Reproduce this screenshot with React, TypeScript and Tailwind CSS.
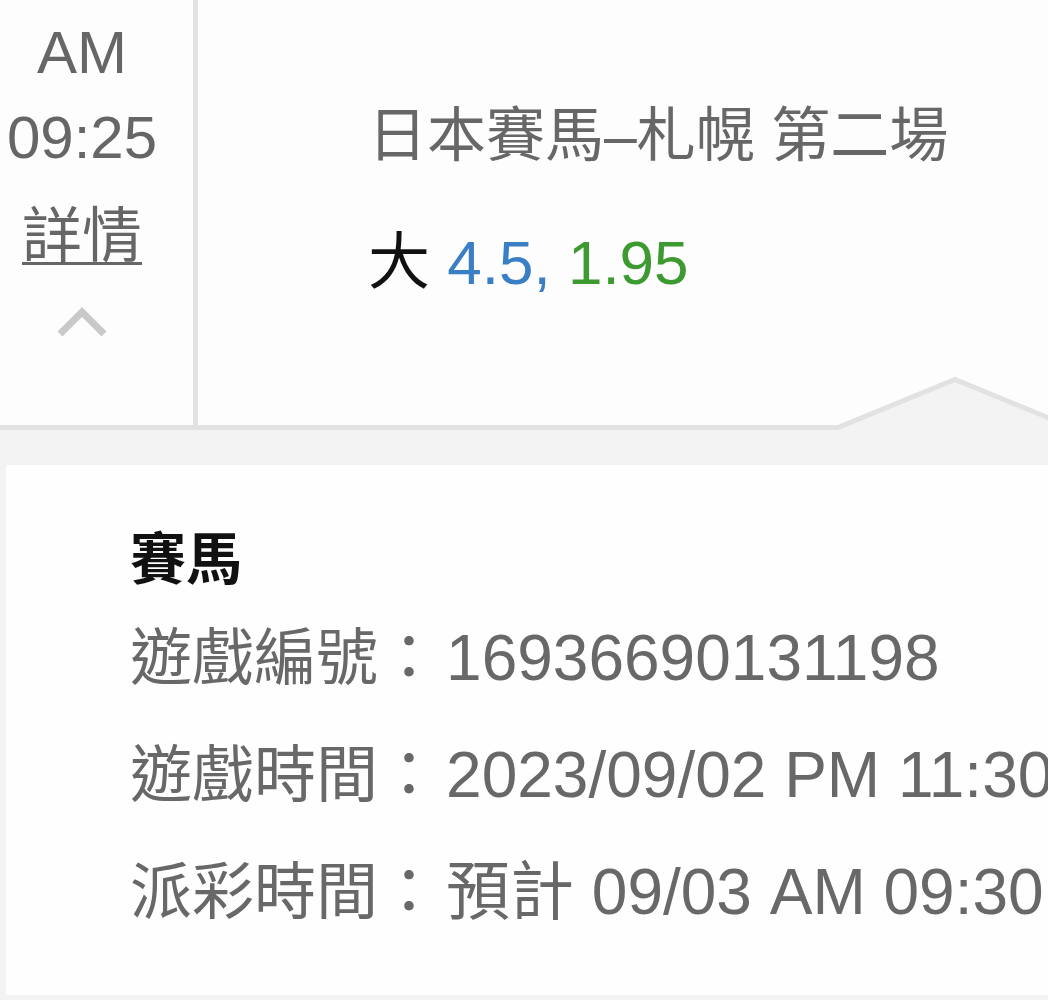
import React from 'react'

const rows = [
  { label: '遊戲編號', value: '16936690131198' },
  { label: '遊戲時間', value: '2023/09/02 PM 11:30' },
  { label: '派彩時間', value: '預計 09/03 AM 09:30' },
]

function ChevronUp() {
  return (
    <svg width="52" height="34" viewBox="0 0 52 34" className="block">
      <polyline points="4,29 26,7 48,29" fill="none" stroke="#c9c9c9" strokeWidth="7" />
    </svg>
  )
}

// the little pointer that rises out of the divider toward the card below
function Notch() {
  return (
    <svg width="218" height="60" viewBox="0 0 218 60" className="absolute left-[830px] top-[370px] block">
      <polygon points="8,57.5 125,9.5 242,57.5 242,62 8,62" fill="#f3f3f3" />
      <polyline points="-10,57.5 8,57.5 125,9.5 242,57.5" fill="none" stroke="#e2e2e2" strokeWidth="5" />
    </svg>
  )
}

export default function App() {
  return (
    <div className="w-[1048px] h-[1000px] overflow-hidden bg-[#f3f3f3] font-['Liberation_Sans','Noto_Sans_CJK_TC',sans-serif]">
      <div className="relative flex h-[430px] bg-[#fdfdfd] border-b-[5px] border-[#e2e2e2]">
        <div className="w-[198px] shrink-0 border-r-[5px] border-[#e2e2e2] pr-[29px] pt-[10px] flex flex-col items-center text-[#666] text-[60px]">
          <div className="leading-[85px]">AM</div>
          <div className="leading-[85px]">09:25</div>
          <div className="mt-[14px] leading-[85px] underline decoration-[3px] underline-offset-[5px]">詳情</div>
          <div className="mt-[26px]">
            <ChevronUp />
          </div>
        </div>
        <div className="flex-1 pl-[170px] pt-[96px]">
          <div className="text-[59px] leading-[80px] text-[#676767] whitespace-nowrap">日本賽馬–札幌 第二場</div>
          <div className="mt-[47px] text-[62px] leading-[80px] whitespace-nowrap">
            <span className="text-[#111]">大</span>{' '}
            <span className="text-[#3a7ec6]">4.5,</span>{' '}
            <span className="text-[#3c9a30]">1.95</span>
          </div>
        </div>
        <Notch />
      </div>

      <div className="flex pl-[6px] pt-[35px]">
        <div className="flex-1 h-[530px] bg-[#fefefe] pl-[124px] pt-[55px]">
          <div className="text-[56px] leading-[80px] font-bold text-[#111]">賽馬</div>
          {rows.map((r) => (
            <div key={r.label} className="text-[62px] leading-[117px] text-[#686868] whitespace-nowrap">
              {r.label}：<span className="ml-[6px] text-[64px] leading-[117px]">{r.value}</span>
            </div>
          ))}
        </div>
      </div>
    </div>
  )
}
